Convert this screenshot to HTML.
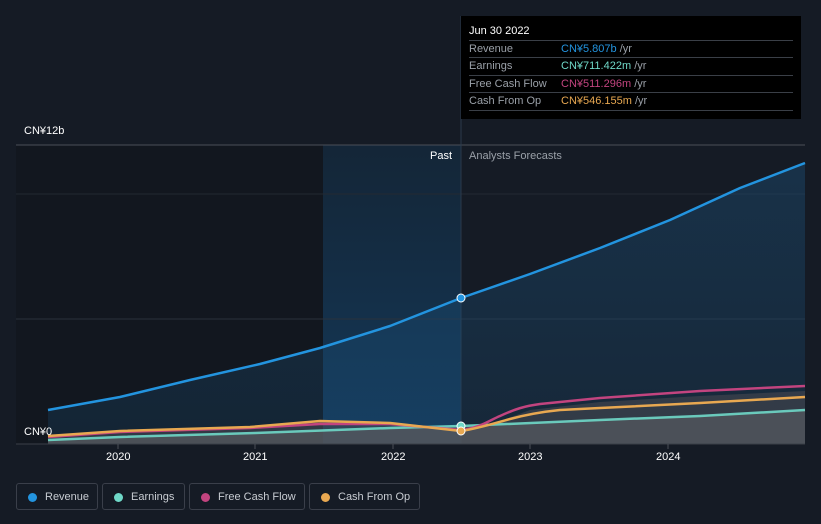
<!DOCTYPE html>
<html><head><meta charset="utf-8"><style>
body{margin:0;width:821px;height:524px;background:#151b25;overflow:hidden;font-family:"Liberation Sans","Noto Sans CJK SC",sans-serif;position:relative}
.t{position:absolute;color:#fff;font-size:11px}
.tip{position:absolute;left:461px;top:16px;width:340px;height:103px;background:#000}
.tip .h{position:absolute;left:8px;top:9px;color:#fff;font-size:11px}
.row{position:absolute;left:8px;width:324px;height:17px;border-top:1px solid #3a3f47;font-size:11px;line-height:17px;color:#9aa0a8}
.row span{position:absolute;left:92px}
.row i{font-style:normal;color:#9aa0a8}
.leg{position:absolute;top:483px;height:27px;border:1px solid #3a3f4a;border-radius:3px;color:#c8ccd2;font-size:11px;line-height:27px;box-sizing:border-box}
.leg b{position:absolute;left:11px;top:9px;width:9px;height:9px;border-radius:50%}
.leg span{position:absolute;left:28px}
</style></head><body>
<svg width="821" height="524" style="position:absolute;left:0;top:0">
<defs>
<linearGradient id="rg" x1="0" y1="0" x2="0" y2="1"><stop offset="0" stop-color="#1b4d74" stop-opacity=".45"/><stop offset="1" stop-color="#1b4d74" stop-opacity=".25"/></linearGradient>
<linearGradient id="hg" x1="0" y1="0" x2="0" y2="1"><stop offset="0" stop-color="#14314a" stop-opacity=".5"/><stop offset="1" stop-color="#14426a" stop-opacity=".8"/></linearGradient>
</defs>
<rect x="16" y="145" width="307" height="299" fill="#12171f"/>
<rect x="323" y="145" width="138" height="299" fill="url(#hg)"/>
<line x1="16" y1="145" x2="805" y2="145" stroke="#4a4f58"/>
<line x1="16" y1="194" x2="805" y2="194" stroke="#232932"/>
<line x1="16" y1="319" x2="805" y2="319" stroke="#2a313b"/>
<line x1="461" y1="16" x2="461" y2="444" stroke="#2a3a4c"/>
<path d="M48,410 L120,397 L190,380 L260,364 L320,348 L390,326 L461,298 L530,274 L600,248 L670,220 L740,188 L805,163 L805,444 L48,444Z" fill="url(#rg)"/>
<path d="M48,437 L120,432 L250,428 L320,422 L390,423 L461,431 L490,425 L530,410 L600,402 L700,396 L805,391 L805,444 L48,444Z" fill="#4a4a52" opacity=".55"/>
<path d="M48,440 L120,437 L255,433 L390,428 L461,426 L600,420 L700,416 L805,410 L805,444 L48,444Z" fill="#555a60" opacity=".7"/>
<g fill="none" stroke-width="2.5" stroke-linejoin="round">
<path d="M48,410 L120,397 L190,380 L260,364 L320,348 L390,326 L461,298 L530,274 L600,248 L670,220 L740,188 L805,163" stroke="#2394df"/>
<path d="M48,440 L120,437 L255,433 L390,428 L461,426 L600,420 L700,416 L805,410" stroke="#6fd8c8" opacity=".9"/>
<path d="M48,437 L120,432 L250,428 L320,424 L390,424 L461,430 C480,428 490,420 500,416 C515,409 525,406 540,404 L600,398 L700,391 L805,386" stroke="#c2447f"/>
<path d="M48,436 L120,431 L250,427 L320,421 L390,423 L461,431 C480,428 495,423 510,419 C525,415 540,412 560,410 L600,408 L700,403 L805,397" stroke="#e8a851"/>
</g>
<circle cx="461" cy="298" r="4" fill="#2394df" stroke="#fff" stroke-width="1"/>
<circle cx="461" cy="426" r="4" fill="#6fd8c8" stroke="#fff" stroke-width="1"/>
<circle cx="461" cy="431" r="4" fill="#e8a851" stroke="#fff" stroke-width="1"/>
<line x1="16" y1="444" x2="805" y2="444" stroke="#3a3f48"/>
<g stroke="#4a4f58"><line x1="118" y1="444" x2="118" y2="449"/><line x1="255" y1="444" x2="255" y2="449"/><line x1="393" y1="444" x2="393" y2="449"/><line x1="530" y1="444" x2="530" y2="449"/><line x1="668" y1="444" x2="668" y2="449"/></g>
</svg>
<div class="t" style="left:24px;top:125px">CN¥12b</div>
<div class="t" style="left:24px;top:426px">CN¥0</div>
<div class="t" style="left:430px;top:150px">Past</div>
<div class="t" style="left:469px;top:150px;color:#9aa0a8">Analysts Forecasts</div>
<div class="t" style="left:106px;top:451px">2020</div>
<div class="t" style="left:243px;top:451px">2021</div>
<div class="t" style="left:381px;top:451px">2022</div>
<div class="t" style="left:518px;top:451px">2023</div>
<div class="t" style="left:656px;top:451px">2024</div>
<div class="tip"><div class="h">Jun 30 2022</div>
<div class="row" style="top:24px">Revenue<span><em style="font-style:normal;color:#2394df">CN¥5.807b</em> <i>/yr</i></span></div>
<div class="row" style="top:41px">Earnings<span><em style="font-style:normal;color:#6fd8c8">CN¥711.422m</em> <i>/yr</i></span></div>
<div class="row" style="top:59px">Free Cash Flow<span><em style="font-style:normal;color:#c2447f">CN¥511.296m</em> <i>/yr</i></span></div>
<div class="row" style="top:76px">Cash From Op<span><em style="font-style:normal;color:#e8a851">CN¥546.155m</em> <i>/yr</i></span></div>
<div class="row" style="top:94px;height:0"></div>
</div>
<div class="leg" style="left:16px;width:82px"><b style="background:#2394df"></b><span>Revenue</span></div>
<div class="leg" style="left:102px;width:83px"><b style="background:#6fd8c8"></b><span>Earnings</span></div>
<div class="leg" style="left:189px;width:116px"><b style="background:#c2447f"></b><span>Free Cash Flow</span></div>
<div class="leg" style="left:309px;width:111px"><b style="background:#e8a851"></b><span>Cash From Op</span></div>
</body></html>
